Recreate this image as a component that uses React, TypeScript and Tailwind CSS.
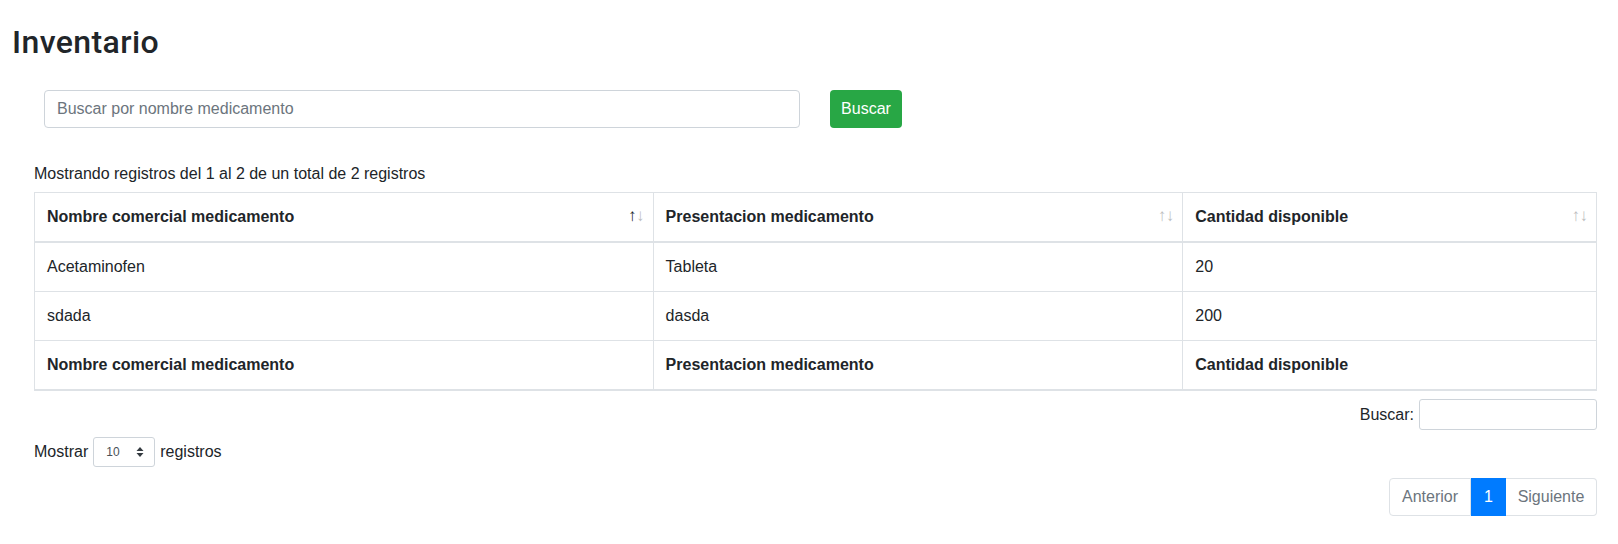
import React from "react";

function SortIcon({ active }: { active?: boolean }) {
  return (
    <>
      <span
        className={`absolute right-[16px] top-[13px] text-[17px] leading-[20px] font-normal select-none text-[#212529] ${
          active ? "opacity-100" : "opacity-30"
        }`}
      >
        ↑
      </span>
      <span className="absolute right-[8px] top-[13px] text-[17px] leading-[20px] font-normal select-none text-[#212529] opacity-30">
        ↓
      </span>
    </>
  );
}

const heads = ["Nombre comercial medicamento", "Presentacion medicamento", "Cantidad disponible"];
const widths = ["w-[619px]", "w-[530px]", "w-[414px]"];
const rows = [
  ["Acetaminofen", "Tableta", "20"],
  ["sdada", "dasda", "200"],
];

export default function App() {
  return (
    <div className="min-h-[544px] bg-white text-[16px] leading-[24px] text-[#212529] font-['Liberation_Sans',Arial,sans-serif]">
      <h2 className="pl-[12px] pt-[23px] text-[32px] leading-[38px] font-medium tracking-[0.4px] font-['Roboto','Liberation_Sans',sans-serif]">
        Inventario
      </h2>

      <div className="mt-[29px] flex items-center pl-[44px]">
        <input
          className="h-[38px] w-[756px] rounded-[4px] border border-[#ced4da] px-[12px] text-[16px] text-[#495057] placeholder-[#6c757d] outline-none font-['Liberation_Sans',Arial,sans-serif]"
          placeholder="Buscar por nombre medicamento"
        />
        <button className="ml-[30px] h-[38px] w-[72px] rounded-[4px] bg-[#28a745] text-[16px] text-white font-['Liberation_Sans',Arial,sans-serif]">
          Buscar
        </button>
      </div>

      <div className="w-[1597px] pl-[34px]">
        <div className="mt-[34px] h-[24px]">Mostrando registros del 1 al 2 de un total de 2 registros</div>

        <table className="mt-[6px] w-[1563px] border-collapse border border-[#dee2e6]">
          <thead>
            <tr>
              {heads.map((h, i) => (
                <th
                  key={h}
                  className={`${widths[i]} relative border border-b-2 border-[#dee2e6] px-[12px] py-[12px] text-left font-bold`}
                >
                  {h}
                  <SortIcon active={i === 0} />
                </th>
              ))}
            </tr>
          </thead>
          <tbody>
            {rows.map((r) => (
              <tr key={r[0]}>
                {r.map((c, i) => (
                  <td key={i} className="border border-[#dee2e6] px-[12px] py-[12px]">
                    {c}
                  </td>
                ))}
              </tr>
            ))}
          </tbody>
          <tfoot>
            <tr>
              {heads.map((h) => (
                <th key={h} className="border border-b-2 border-[#dee2e6] px-[12px] py-[12px] text-left font-bold">
                  {h}
                </th>
              ))}
            </tr>
          </tfoot>
        </table>

        <div className="mt-[8px] flex items-center justify-end">
          <label className="mr-[5px]">Buscar:</label>
          <input className="h-[31px] w-[178px] rounded-[3px] border border-[#ced4da] outline-none" />
        </div>

        <div className="mt-[7px] flex h-[30px] items-center">
          <span>Mostrar</span>
          <div className="mx-[5px] flex h-[30px] w-[62px] items-center justify-between rounded-[3px] border border-[#ced4da] pl-[12px] pr-[10px]">
            <span className="text-[12px] leading-none text-[#495057]">10</span>
            <svg width="8" height="12" viewBox="0 0 8 12">
              <path d="M4 1 L7.5 5 H0.5 Z" fill="#343a40" />
              <path d="M4 11 L7.5 7 H0.5 Z" fill="#343a40" />
            </svg>
          </div>
          <span>registros</span>
        </div>

        <div className="mt-[11px] flex justify-end">
          <div className="flex h-[38px] text-[16px]">
            <span className="flex w-[82px] items-center justify-center rounded-l-[4px] border border-[#dee2e6] text-[#6c757d]">
              Anterior
            </span>
            <span className="flex w-[35px] items-center justify-center border border-[#007bff] bg-[#007bff] text-white">
              1
            </span>
            <span className="flex w-[91px] items-center justify-center rounded-r-[4px] border border-l-0 border-[#dee2e6] text-[#6c757d]">
              Siguiente
            </span>
          </div>
        </div>
      </div>
    </div>
  );
}
